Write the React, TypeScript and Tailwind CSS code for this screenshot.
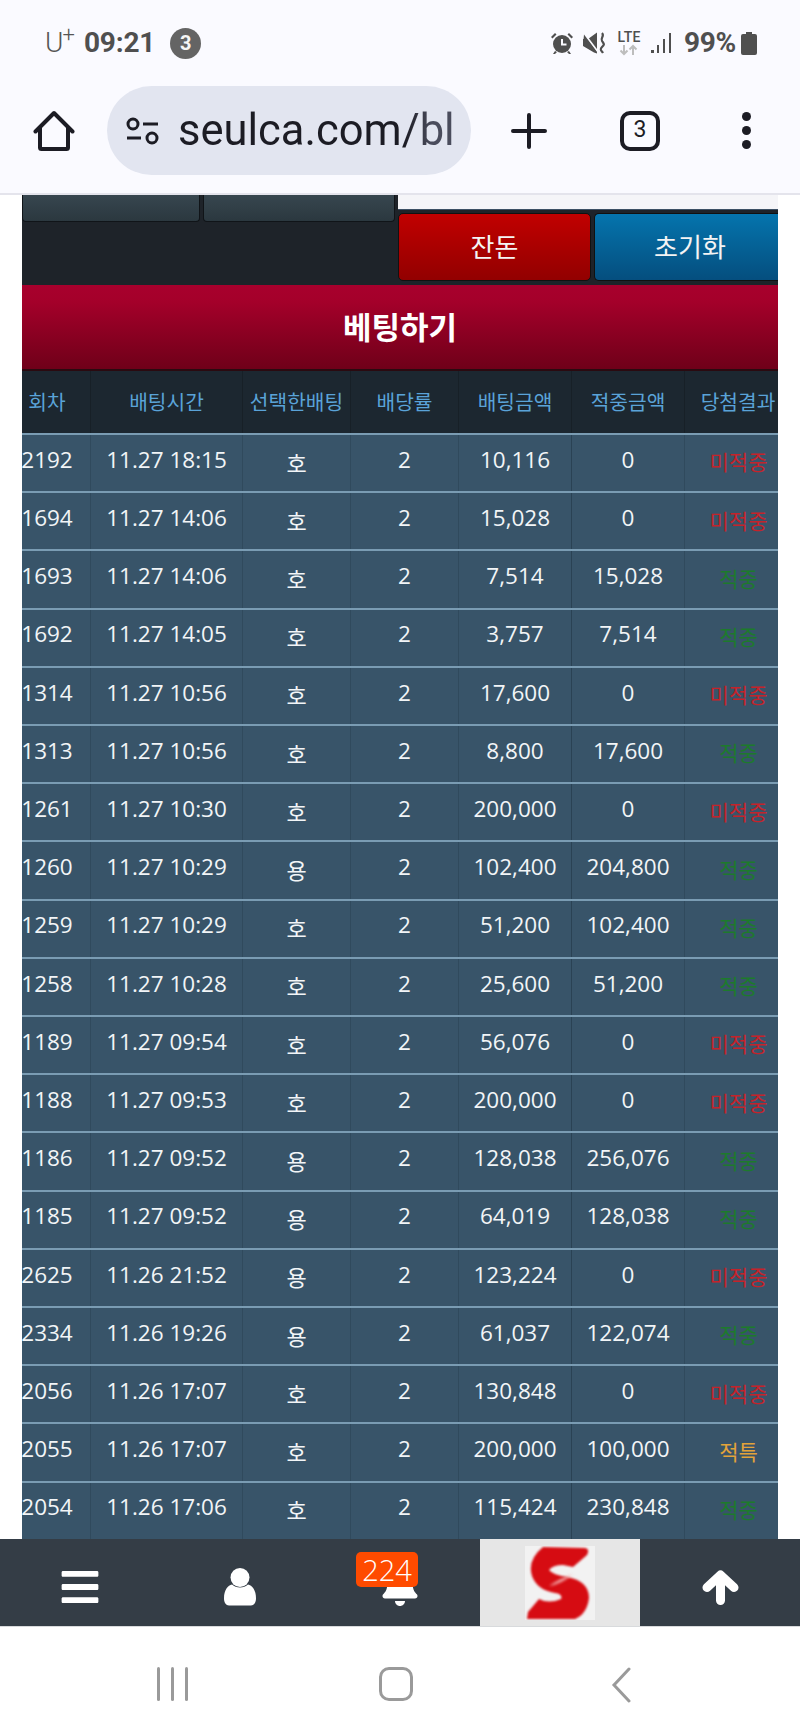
import React from "react";
import { FaBars, FaBell } from "react-icons/fa";

type Row = [string, string, string, string, string, string];
const rows: Row[] = [
  ["2192", "11.27 18:15", "호", "10,116", "0", "미적중"],
  ["1694", "11.27 14:06", "호", "15,028", "0", "미적중"],
  ["1693", "11.27 14:06", "호", "7,514", "15,028", "적중"],
  ["1692", "11.27 14:05", "호", "3,757", "7,514", "적중"],
  ["1314", "11.27 10:56", "호", "17,600", "0", "미적중"],
  ["1313", "11.27 10:56", "호", "8,800", "17,600", "적중"],
  ["1261", "11.27 10:30", "호", "200,000", "0", "미적중"],
  ["1260", "11.27 10:29", "용", "102,400", "204,800", "적중"],
  ["1259", "11.27 10:29", "호", "51,200", "102,400", "적중"],
  ["1258", "11.27 10:28", "호", "25,600", "51,200", "적중"],
  ["1189", "11.27 09:54", "호", "56,076", "0", "미적중"],
  ["1188", "11.27 09:53", "호", "200,000", "0", "미적중"],
  ["1186", "11.27 09:52", "용", "128,038", "256,076", "적중"],
  ["1185", "11.27 09:52", "용", "64,019", "128,038", "적중"],
  ["2625", "11.26 21:52", "용", "123,224", "0", "미적중"],
  ["2334", "11.26 19:26", "용", "61,037", "122,074", "적중"],
  ["2056", "11.26 17:07", "호", "130,848", "0", "미적중"],
  ["2055", "11.26 17:07", "호", "200,000", "100,000", "적특"],
  ["2054", "11.26 17:06", "호", "115,424", "230,848", "적중"],
];

const headers = ["회차", "배팅시간", "선택한배팅", "배당률", "배팅금액", "적중금액", "당첨결과"];
const grid = "grid grid-cols-[87px_152px_108px_108px_113px_113px_107px] w-[888px] -ml-[18px]";

function resultColor(r: string) {
  if (r === "미적중") return "text-[#c4232b]";
  if (r === "적특") return "text-[#e2a33a]";
  return "text-[#1d7a2c]";
}

function StatusBar() {
  return (
    <div className="h-[86px] pt-[22px] pl-[45px] pr-[43px] flex items-start justify-between text-[#4f4f4f] font-['Roboto',sans-serif]">
      <div className="flex items-center h-[42px]">
        <span className="text-[28px] font-light text-[#555] leading-none flex items-start w-[32px]">
          U<span className="text-[22px] -mt-[5px] -ml-[1px]">+</span>
        </span>
        <span className="text-[28px] font-bold leading-none ml-[7px] tracking-[-0.2px]">09:21</span>
        <span className="ml-[15px] w-[31px] h-[31px] rounded-full bg-[#646464] text-[#f5f5f5] text-[20px] font-bold flex items-center justify-center">3</span>
      </div>
      <div className="flex items-center h-[42px]">
        <svg width="24" height="24" viewBox="0 0 24 24" fill="#4f4f4f">
          <circle cx="12" cy="13" r="9" />
          <path d="M1 6l4-4 1.500 1.500-4 4zM23 6l-4-4-1.500 1.500 4 4zM5 20l-2 3h2l2-2zM19 20l2 3h-2l-2-2z" />
          <path d="M12 8v5.500h4.500" fill="none" stroke="#fafaff" strokeWidth="2" />
        </svg>
        <svg width="24" height="24" viewBox="0 0 24 24" fill="#4f4f4f" className="ml-[9px]">
          <path d="M0 8h5l9-6.500v21l-3-1L0 15z" />
          <path d="M0 1l15 20" stroke="#fafaff" strokeWidth="2" />
          <path d="M1 3.500l13 17.500-4-1L0 14z" />
          <path d="M19 2c3 3-2 5 0 8s3 3 0 6 0 4 1 6" fill="none" stroke="#4f4f4f" strokeWidth="2.200" />
        </svg>
        <div className="ml-[9px] w-[26px] flex flex-col items-center">
          <span className="text-[14px] font-medium leading-[14px] tracking-[0.2px]">LTE</span>
          <svg width="20" height="12" viewBox="0 0 20 12" fill="none" stroke="#bdbdbd" strokeWidth="2">
            <path d="M5 1v9M1.500 6.500L5 10l3.500-3.500M14 11V2M10.500 5.500L14 2l3.500 3.500" />
          </svg>
        </div>
        <svg width="21" height="22" viewBox="0 0 21 22" fill="#4f4f4f" className="ml-[9px]">
          <rect x="0" y="18" width="3" height="3" />
          <rect x="6" y="13" width="2" height="8" />
          <rect x="12" y="7" width="2" height="14" />
          <rect x="18" y="1" width="2" height="20" />
        </svg>
        <span className="ml-[12px] text-[28px] font-bold leading-none tracking-[-0.3px]">99%</span>
        <svg width="16" height="23" viewBox="0 0 16 23" fill="#4f4f4f" className="ml-[5px]">
          <path d="M5 0h6v2h3a2 2 0 0 1 2 2v17a2 2 0 0 1-2 2H2a2 2 0 0 1-2-2V4a2 2 0 0 1 2-2h3z" />
        </svg>
      </div>
    </div>
  );
}

function UrlBar() {
  return (
    <div className="h-[107px] flex items-start relative">
      <div className="w-[107px] h-[89px] flex items-center justify-center">
        <svg width="42" height="42" viewBox="0 0 42 42" fill="none" stroke="#1c1c24" strokeWidth="4" strokeLinejoin="round" strokeLinecap="round">
          <path d="M2.500 21.500L21 3l18.500 18.500M7 18v19.500a1.500 1.500 0 0 0 1.500 1.500h25a1.500 1.500 0 0 0 1.500-1.500V18" />
        </svg>
      </div>
      <div className="w-[364px] h-[89px] rounded-[45px] bg-[#e2e5f0] flex items-center pl-[19px] overflow-hidden">
        <svg width="34" height="32" viewBox="0 0 34 32" fill="none" stroke="#1c1c24" strokeWidth="3" className="shrink-0">
          <circle cx="7" cy="9" r="5" />
          <path d="M17 9h15M1 23h14" />
          <circle cx="26" cy="23" r="5" />
        </svg>
        <span className="ml-[18px] w-[276px] shrink-0 overflow-hidden whitespace-nowrap text-[43.500px] leading-[60px] font-['Roboto',sans-serif] bg-[linear-gradient(90deg,#1c1c24_82%,#4a4c5c_92%)] bg-clip-text text-transparent">seulca.com/bl</span>
      </div>
      <div className="flex-1 h-[89px] flex items-center">
        <svg width="36" height="36" viewBox="0 0 36 36" fill="none" stroke="#1c1c24" strokeWidth="4" strokeLinecap="round" className="ml-[40px]">
          <path d="M18 2v32M2 18h32" />
        </svg>
        <div className="ml-[73px] w-[40px] h-[40px] rounded-[10px] border-[4px] border-[#1c1c24] text-[#1c1c24] flex items-center justify-center text-[23px] font-['Roboto',sans-serif]">3</div>
        <div className="ml-[82px] flex flex-col gap-[5px]">
          <div className="w-[9px] h-[9px] rounded-full bg-[#1c1c24]" />
          <div className="w-[9px] h-[9px] rounded-full bg-[#1c1c24]" />
          <div className="w-[9px] h-[9px] rounded-full bg-[#1c1c24]" />
        </div>
      </div>
    </div>
  );
}

function TopControls() {
  return (
    <div className="h-[90px] shrink-0 bg-[#1e2329] flex">
      <div className="w-[376px] flex gap-[2px] items-start pr-[3px]">
        <div className="w-[178px] h-[27px] rounded-b-[4px] border border-t-0 border-[#101418] bg-[linear-gradient(180deg,#37464f,#2b383f)]" />
        <div className="w-[193px] h-[27px] ml-[1px] rounded-b-[4px] border border-t-0 border-[#101418] bg-[linear-gradient(180deg,#37464f,#2b383f)]" />
      </div>
      <div className="flex-1 flex flex-col">
        <div className="h-[15px] bg-[#f5f5f8] border-b border-[#3c5064]" />
        <div className="mt-[3px] flex gap-[3px]">
          <div className="w-[193px] h-[68px] rounded-[5px] border border-[#111] bg-[linear-gradient(180deg,#c10000,#920000)] text-[#f4f4f4] text-[26px] flex items-center justify-center">잔돈</div>
          <div className="flex-1 h-[68px] pl-[7px] rounded-l-[5px] border border-r-0 border-[#111] bg-[linear-gradient(180deg,#0574ad,#054e7e)] text-[#f4f4f4] text-[26px] flex items-center justify-center">초기화</div>
        </div>
      </div>
    </div>
  );
}

export default function App() {
  return (
    <div className="w-[800px] h-[1734px] bg-white flex flex-col overflow-hidden font-['Open_Sans','Noto_Sans_CJK_KR',sans-serif]">
      <header className="h-[195px] shrink-0 bg-[#fafaff] border-b-[2px] border-[#e4e4ec]">
        <StatusBar />
        <UrlBar />
      </header>

      <main className="flex-1 min-h-0 mx-[22px] flex flex-col overflow-hidden">
        <TopControls />
        <div className="h-[86px] shrink-0 border-b-[2px] border-[#2a0a10] bg-[linear-gradient(180deg,#a8002d,#a4002a_20%,#6f0019)] text-white text-[31px] font-bold flex items-center justify-center">베팅하기</div>
        <div className={`${grid} h-[62px] shrink-0 bg-[#1c2730] text-[#5aa3d8] text-[20.300px]`}>
          {headers.map((h) => (
            <div key={h} className="flex items-center justify-center border-r border-[#172027] whitespace-nowrap">{h}</div>
          ))}
        </div>
        <div className="flex-1 min-h-0 flex flex-col">
          {rows.map((r, i) => (
            <div key={i} className={`${grid} flex-1 bg-[#385469] border-t-[2px] border-[#7a9cb3] text-[#f2f5f7] text-[22.500px]`}>
              <div className="flex items-center justify-center pb-[7px] border-r border-[#304a5d]">{r[0]}</div>
              <div className="flex items-center justify-center pb-[7px] border-r border-[#304a5d] whitespace-nowrap">{r[1]}</div>
              <div className="flex items-center justify-center text-[22px] border-r border-[#304a5d]">{r[2]}</div>
              <div className="flex items-center justify-center pb-[7px] border-r border-[#304a5d]">2</div>
              <div className="flex items-center justify-center pb-[7px] border-r border-[#2a4254]">{r[3]}</div>
              <div className="flex items-center justify-center pb-[7px] border-r border-[#304a5d]">{r[4]}</div>
              <div className={`flex items-center justify-center text-[21px] ${resultColor(r[5])}`}>{r[5]}</div>
            </div>
          ))}
        </div>
      </main>

      <nav className="h-[88px] shrink-0 bg-[#343d46] grid grid-cols-5 text-white border-b border-[#d8dadc]">
        <div className="flex items-center justify-center pt-[8px]">
          <FaBars size={42} />
        </div>
        <div className="flex items-center justify-center pt-[8px]">
          <svg width="32" height="38" viewBox="0 0 32 38" fill="#fff">
            <circle cx="16" cy="9.500" r="9.500" />
            <path d="M8 16.500c4 4 12 4 16 0 4 1 8 5 8 14 0 4-2 7-5 7H5c-3 0-5-3-5-7 0-9 4-13 8-14z" />
          </svg>
        </div>
        <div className="relative flex items-center justify-center">
          <FaBell size={40} className="mt-[6px]" />
          <span className="absolute left-[36px] top-[13px] w-[62px] h-[35px] rounded-[5px] bg-[#ff4b00] text-[#fff] text-[29px] font-light leading-[35px] text-center">224</span>
        </div>
        <div className="bg-[#e6e6e6] flex items-center justify-center">
          <svg width="70" height="74" viewBox="0 0 70 74" className="bg-[#f2f2f2]">
            <path className="blur-[1px]" d="M18 1 L60 2 Q65 3 62 9 L48 21 L38 19 Q28 19 24 24 Q28 29 42 31 Q64 35 64 52 Q62 68 50 73 L2 73 L3 66 L14 53 Q24 58 36 53 Q38 48 30 47 Q12 44 7 30 Q2 14 18 1Z" fill="#d60c12" />
            <path className="blur-[1.500px]" d="M24 40 Q36 38 48 28 Q36 32 24 40Z" fill="#f4b8b8" />
          </svg>
        </div>
        <div className="flex items-center justify-center pt-[8px]">
          <svg width="37" height="36" viewBox="0 0 37 36" fill="none" stroke="#fff" strokeWidth="9" strokeLinecap="round" strokeLinejoin="round">
            <path d="M18.500 31.500V7M5 18.500L18.500 6 32 18.500" />
          </svg>
        </div>
      </nav>

      <footer className="h-[107px] shrink-0 bg-white flex items-start pt-[40px]">
        <div className="w-[157px] shrink-0" />
        <div className="w-[31px] h-[34px] flex justify-between">
          <div className="w-[3px] h-full bg-[#9a9a9a] rounded-full" />
          <div className="w-[3px] h-full bg-[#9a9a9a] rounded-full" />
          <div className="w-[3px] h-full bg-[#9a9a9a] rounded-full" />
        </div>
        <div className="w-[191px] shrink-0" />
        <div className="w-[34px] h-[34px] rounded-[10px] border-[3px] border-[#9a9a9a]" />
        <div className="w-[198px] shrink-0" />
        <svg width="20" height="36" viewBox="0 0 20 36" fill="none" stroke="#9a9a9a" strokeWidth="3" strokeLinecap="round">
          <path d="M18 2L3 18l15 16" />
        </svg>
      </footer>
    </div>
  );
}
